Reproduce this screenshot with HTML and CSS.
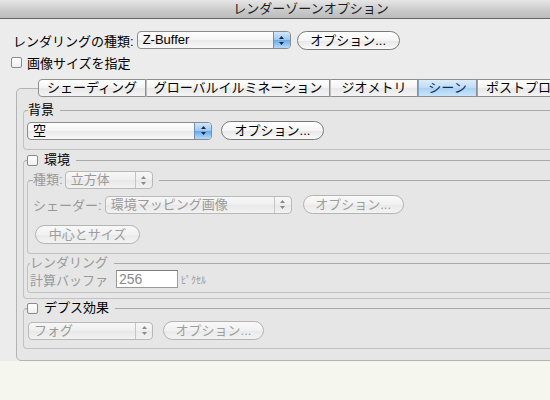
FILE: index.html
```html
<!DOCTYPE html>
<html lang="ja">
<head>
<meta charset="utf-8">
<title>レンダーゾーンオプション</title>
<link rel="stylesheet" href="styles.css">
</head>
<body>
<div class="window">
  <div class="titlebar">レンダーゾーンオプション</div>

  <div class="row row-type">
    <span class="label">レンダリングの種類:</span>
    <div class="popup popup-zbuf">
      <span class="popup-text">Z-Buffer</span>
      <span class="stepper blue"><svg width="5" height="9" viewBox="0 0 5 9"><path d="M2.5 0 L5 3 H0 Z M0 6 H5 L2.5 9 Z" fill="#1b2a44"/></svg></span>
    </div>
    <button class="btn btn-top">オプション...</button>
  </div>

  <div class="row row-size"><span class="check"></span><span>画像サイズを指定</span></div>

  <div class="tabs">
    <span class="tab first t1">シェーディング</span>
    <span class="tab t2">グローバルイルミネーション</span>
    <span class="tab t3">ジオメトリ</span>
    <span class="tab sel t4">シーン</span>
    <span class="tab t5">ポストプロ</span>
  </div>

  <div class="panel">
    <fieldset class="group g-bg">
      <legend>背景</legend>
      <div class="row row-bg">
        <div class="popup popup-sky">
          <span class="popup-text">空</span>
          <span class="stepper blue"><svg width="5" height="9" viewBox="0 0 5 9"><path d="M2.5 0 L5 3 H0 Z M0 6 H5 L2.5 9 Z" fill="#1b2a44"/></svg></span>
        </div>
        <button class="btn btn-bg">オプション...</button>
      </div>
    </fieldset>

    <fieldset class="group g-env">
      <legend class="leg-check"><span class="check"></span><span>環境</span></legend>

      <fieldset class="group g-kind dis">
        <legend class="leg-kind">
          <span>種類:</span>
          <span class="popup dis popup-cube">
            <span class="popup-text">立方体</span>
            <span class="stepper"><svg width="5" height="9" viewBox="0 0 5 9"><path d="M2.5 0 L5 3 H0 Z M0 6 H5 L2.5 9 Z" fill="#8a8a8a"/></svg></span>
          </span>
        </legend>
        <div class="row row-shader">
          <span class="label">シェーダー:</span>
          <div class="popup dis popup-shader">
            <span class="popup-text">環境マッピング画像</span>
            <span class="stepper"><svg width="5" height="9" viewBox="0 0 5 9"><path d="M2.5 0 L5 3 H0 Z M0 6 H5 L2.5 9 Z" fill="#8a8a8a"/></svg></span>
          </div>
          <button class="btn dis btn-shader">オプション...</button>
        </div>
        <div class="row row-center">
          <button class="btn dis btn-center">中心とサイズ</button>
        </div>
      </fieldset>

      <fieldset class="group g-render dis">
        <legend>レンダリング</legend>
        <div class="row row-buf">
          <span class="label">計算バッファ</span>
          <span class="input">256</span>
          <span class="unit">ﾋﾟｸｾﾙ</span>
        </div>
      </fieldset>
    </fieldset>

    <fieldset class="group g-depth">
      <legend class="leg-check"><span class="check"></span><span>デプス効果</span></legend>
      <div class="row row-depth">
        <div class="popup dis popup-fog">
          <span class="popup-text">フォグ</span>
          <span class="stepper"><svg width="5" height="9" viewBox="0 0 5 9"><path d="M2.5 0 L5 3 H0 Z M0 6 H5 L2.5 9 Z" fill="#8a8a8a"/></svg></span>
        </div>
        <button class="btn dis btn-fog">オプション...</button>
      </div>
    </fieldset>
  </div>
</div>
</body>
</html>
```

FILE: styles.css
```css
* { box-sizing: border-box; }

html, body {
  margin: 0;
  padding: 0;
  overflow: hidden;
  background: #f5f6ee;
}

body {
  font-family: "Liberation Sans", "Noto Sans CJK JP", sans-serif;
  font-size: 13px;
  color: #000;
}

.window {
  width: 622px;
  height: 361px;
  background: #ececec;
  display: flex;
  flex-direction: column;
}

.titlebar {
  flex: none;
  height: 19px;
  line-height: 18px;
  text-align: center;
  color: #1c1c1c;
  background: linear-gradient(#e6e6e6, #c9c9c9 60%, #bcbcbc);
  border-bottom: 1px solid #666;
}

.row {
  display: flex;
  align-items: center;
  white-space: nowrap;
}

.row-type {
  margin-top: 11px;
  padding-left: 13px;
  height: 20px;
}
.popup-zbuf { margin-left: 3px; width: 154px; }
.btn-top { margin-left: 6px; width: 103px; }

.row-size {
  margin-top: 3px;
  padding-left: 11px;
  height: 18px;
}

.check {
  flex: none;
  display: inline-block;
  width: 11px;
  height: 11px;
  border: 1px solid #8a8a8a;
  border-radius: 2px;
  background: linear-gradient(#ffffff, #efefef);
  margin-right: 5px;
}

/* tabs */
.tabs {
  flex: none;
  display: flex;
  margin: 8px 0 -9px 38px;
  height: 18px;
  position: relative;
  z-index: 1;
  white-space: nowrap;
}
.tab {
  flex: none;
  height: 18px;
  line-height: 16px;
  text-align: center;
  overflow: hidden;
  border: 1px solid #8e8e8e;
  border-left: 1px solid #bdbdbd;
  background: linear-gradient(#ffffff, #f3f3f3 50%, #e8e8e8 51%, #f4f4f4);
}
.tab.first {
  border-left: 1px solid #8e8e8e;
  border-radius: 4px 0 0 4px;
}
.tab.sel {
  background: linear-gradient(#dcedfb, #bcdcf6 50%, #a9d1f3 51%, #c9e5fb);
  color: #102c58;
  border-left-color: #8aa6c6;
}
.t1 { width: 108px; }
.t2 { width: 184px; }
.t3 { width: 88px; }
.t4 { width: 59px; }
.t5 { width: 120px; text-align: left; padding-left: 8px; border-left-color: #8aa6c6; }

/* panel */
.panel {
  flex: 1;
  margin-left: 16px;
  border: 1px solid #b3b3b3;
  border-radius: 5px;
  background: #e6e6e6;
  padding: 14px 0 0 6px;
}

.group {
  margin: 0;
  min-width: 0;
  border: 1px solid #c2c2c2;
  border-top-color: #a9a9a9;
  border-radius: 4px;
  padding: 0 0 0 3px;
}
.group > legend {
  padding: 0 6px 0 0;
  line-height: 14px;
  height: 14px;
  white-space: nowrap;
}

.g-bg { padding-bottom: 9px; }
.g-bg > legend { margin-left: 1px; }
.row-bg { margin-top: 4px; height: 19px; }
.popup-sky { width: 185px; }
.btn-bg { margin-left: 9px; width: 103px; }

.leg-check {
  display: flex;
  align-items: center;
}
.leg-check .check { margin-right: 6px; }

.g-env {
  margin-top: 3px;
  padding-bottom: 5px;
}

.dis { color: #999; }

.g-kind {
  margin-top: 4px;
  padding: 0 0 9px 5px;
}
.g-kind > legend.leg-kind {
  display: flex;
  align-items: center;
  height: 18px;
  line-height: 18px;
}
.popup-cube { margin-left: 2px; width: 88px; }

.row-shader { margin-top: 6px; height: 19px; }
.popup-shader { margin-left: 3px; width: 187px; }
.btn-shader { margin-left: 11px; width: 101px; }

.row-center { margin-top: 11px; height: 19px; }
.btn-center { margin-left: 2px; width: 105px; }

.g-render {
  margin-top: 2px;
  padding: 0 0 4px 2px;
}
.row-buf { height: 18px; }
.input {
  margin-left: 8px;
  width: 62px;
  height: 18px;
  line-height: 16px;
  padding-left: 2px;
  background: #fff;
  border: 1px solid #9a9a9a;
  border-top-color: #7e7e7e;
  color: #8a8a8a;
  font-size: 14px;
}
.unit {
  margin-left: 3px;
  font-size: 10px;
  color: #999;
}

.g-depth {
  margin-top: 2px;
  padding-bottom: 8px;
}
.row-depth { margin-top: 6px; height: 19px; }
.popup-fog { margin-left: 1px; width: 125px; }
.btn-fog { margin-left: 10px; width: 101px; }

/* popup */
.popup {
  flex: none;
  display: flex;
  align-items: stretch;
  height: 18px;
  border: 1px solid #8b8b8b;
  border-radius: 4px;
  background: linear-gradient(#fefefe, #f4f4f4 50%, #e9e9e9 51%, #f8f8f8);
  overflow: hidden;
  white-space: nowrap;
}
.popup-text {
  flex: 1;
  padding-left: 5px;
  line-height: 16px;
  overflow: hidden;
}
.stepper {
  flex: none;
  width: 17px;
  display: flex;
  align-items: center;
  justify-content: center;
  border-left: 1px solid #c4c4c4;
}
.stepper.blue {
  border-left: 1px solid #6d8fbd;
  background: linear-gradient(#d3e7fb, #9cc7f1 50%, #6aa8ea 51%, #b5dafa);
}
.popup.dis {
  border-color: #b9b9b9;
  background: linear-gradient(#f7f7f7, #efefef 50%, #e8e8e8 51%, #f2f2f2);
  color: #9a9a9a;
}

/* push button */
.btn {
  flex: none;
  height: 19px;
  padding: 0;
  border: 1px solid #7a7a7a;
  border-radius: 10px;
  background: linear-gradient(#ffffff, #f5f5f5 50%, #e7e7e7 51%, #fafafa);
  font: inherit;
  line-height: 17px;
  text-align: center;
  color: #000;
  white-space: nowrap;
}
.btn.dis {
  border-color: #b4b4b4;
  color: #9d9d9d;
  background: linear-gradient(#f9f9f9, #f1f1f1 50%, #e9e9e9 51%, #f3f3f3);
}
```
